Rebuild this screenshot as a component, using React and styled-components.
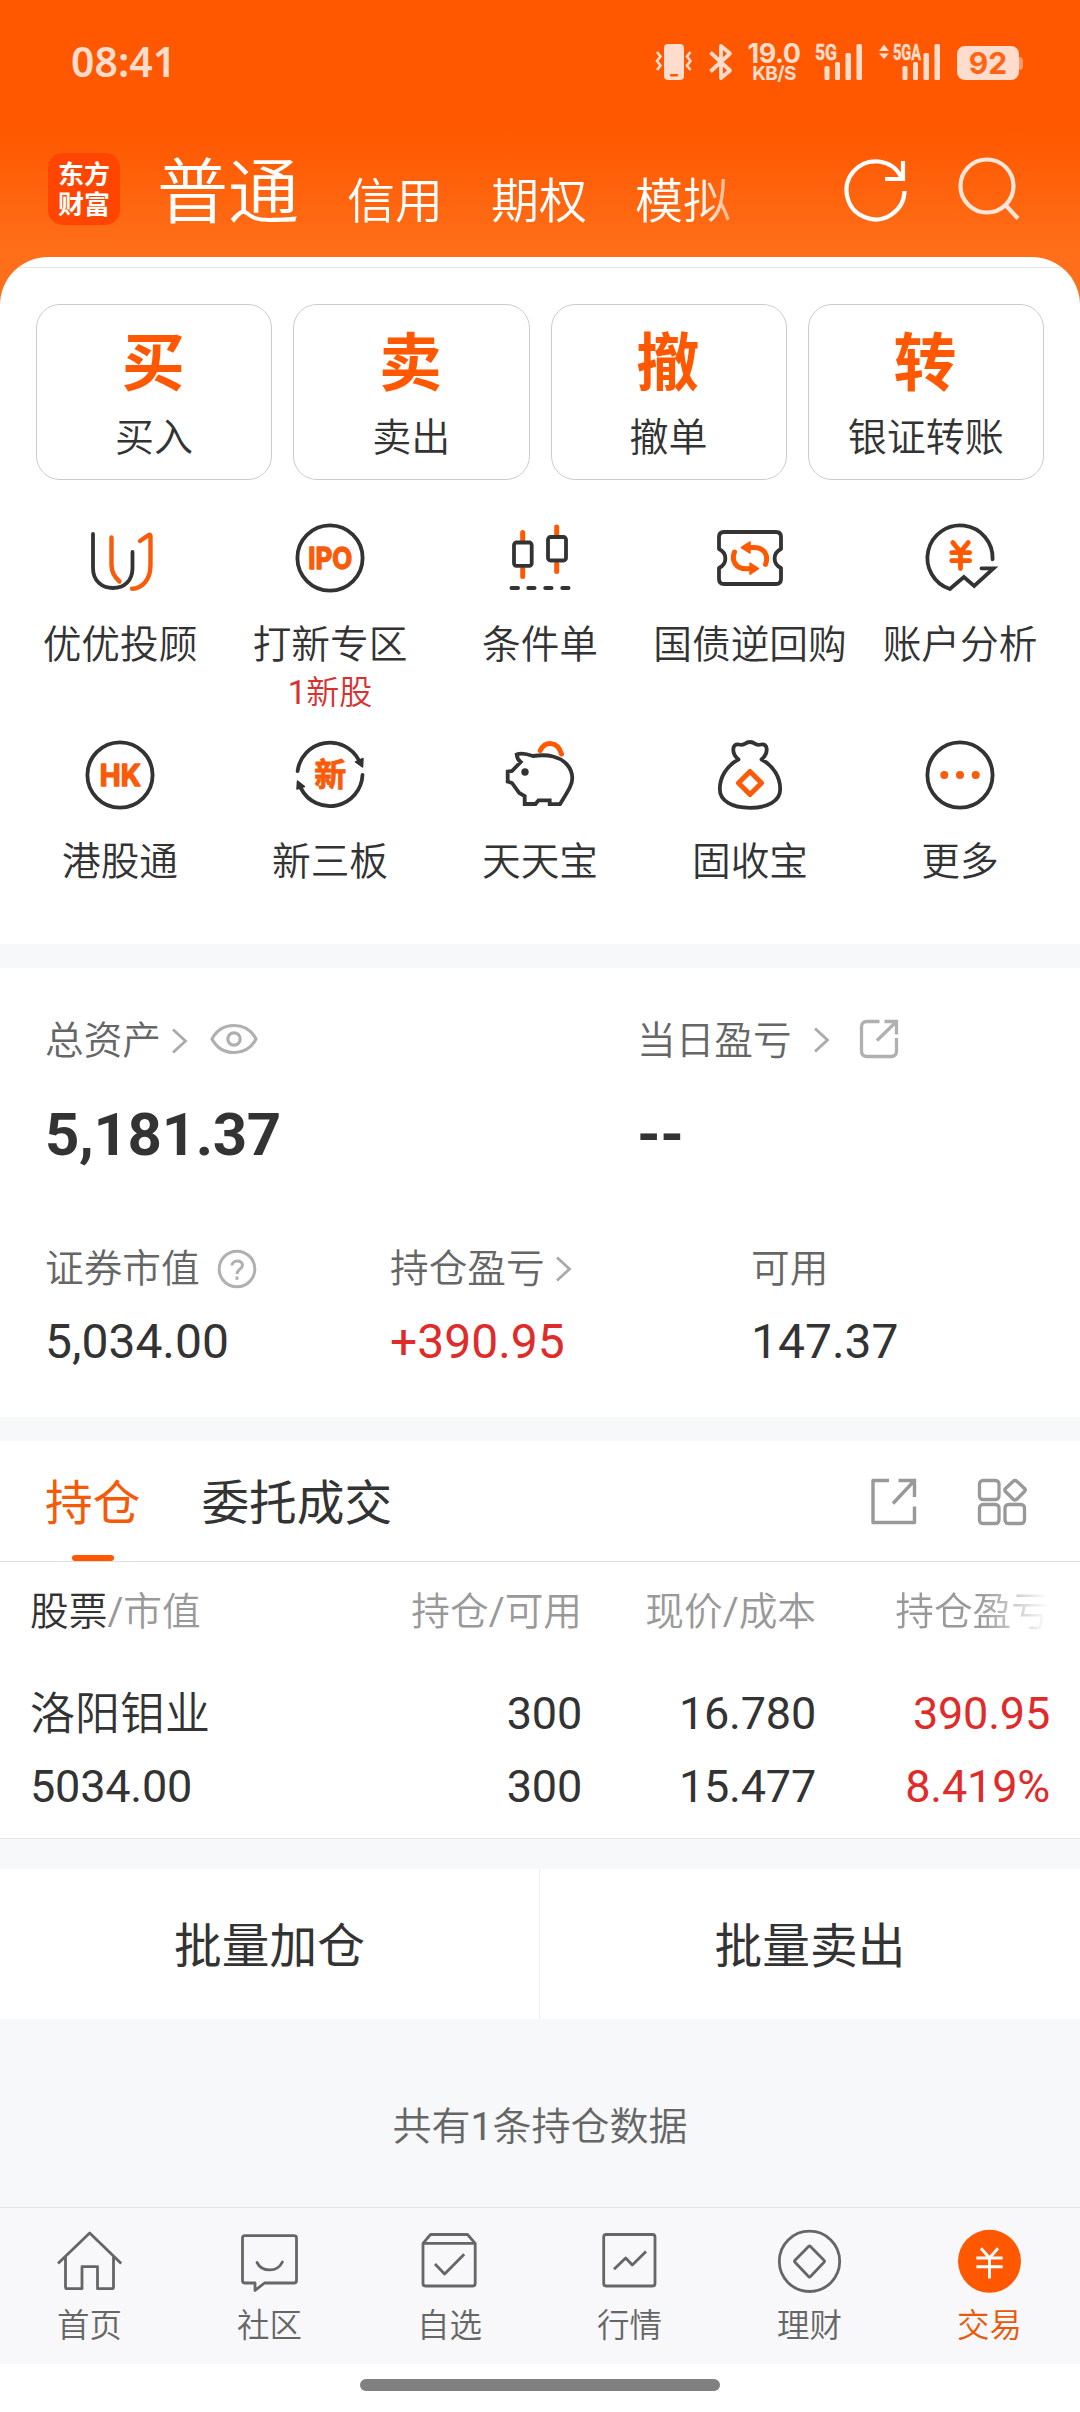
import React from 'react';
import styled, { createGlobalStyle } from 'styled-components';

const ORANGE = '#ff5800';
const DARK = '#333333';
const RED = '#e02b2b';

const GlobalStyle = createGlobalStyle`
  * {
    box-sizing: border-box;
  }

  body {
    margin: 0;
    background: #ffffff;
    font-family: Roboto, "Noto Sans CJK SC", sans-serif;
    font-weight: 350;
    color: ${DARK};
  }

  svg {
    display: block;
    flex: none;
    overflow: visible;
  }
`;

const Page = styled.div`
  display: flex;
  flex-direction: column;
  width: 1080px;
  height: 2412px;
  overflow: hidden;
  background: linear-gradient(to bottom, #ff5800 0, #ff5800 132px, #ff6e19 250px, #ff701c 320px);
`;

/* Latin characters inside light Chinese text */
const Latin = styled.span`
  font-weight: 400;
`;

const StatusBar = styled.div`
  display: flex;
  justify-content: space-between;
  height: 125px;
  padding: 42px 57px 0 71px;
  color: #ffdccb;
`;

const Clock = styled.div`
  font-family: "Noto Sans", sans-serif;
  font-size: 41px;
  font-weight: 650;
  line-height: 38px;
`;

const StatusIcons = styled.div`
  display: flex;
  align-items: flex-start;
`;

const NetSpeed = styled.div`
  display: flex;
  flex-direction: column;
  align-items: center;
  width: 56px;
  margin: 0 12px 0 13px;
  font-family: Inter, sans-serif;
  font-weight: 700;
  font-size: 27px;
  line-height: 23px;
  letter-spacing: -0.5px;
`;

const NetUnit = styled.span`
  font-size: 19px;
  line-height: 17px;
  font-weight: 700;
  letter-spacing: -0.6px;
`;

const Battery = styled.div`
  display: flex;
  align-items: center;
  margin: 4px 0 0 15px;
`;

const BatteryBody = styled.div`
  width: 62px;
  height: 34px;
  border-radius: 8px;
  background: #ffdccb;
  color: #ff6414;
  font-family: Inter, sans-serif;
  font-size: 30px;
  font-weight: 700;
  line-height: 35px;
  text-align: center;
`;

const BatteryCap = styled.div`
  width: 4px;
  height: 13px;
  border-radius: 0 4px 4px 0;
  background: #ff9a66;
`;

const Header = styled.div`
  display: flex;
  align-items: flex-start;
  height: 132px;
  padding: 28px 52px 0 48px;
`;

const Logo = styled.div`
  width: 72px;
  height: 72px;
  padding-top: 5px;
  border-radius: 15px;
  background: #ff4500;
  color: #ffffff;
  font-family: "Noto Sans CJK SC", sans-serif;
  font-size: 26px;
  font-weight: 700;
  line-height: 30px;
  text-align: center;
`;

const AccountTabs = styled.div`
  display: flex;
  align-items: flex-end;
  gap: 48px;
  width: 658px;
  height: 76px;
  margin-left: 37px;
  color: #ffffff;
  white-space: nowrap;
  mask-image: linear-gradient(to right, #000 0, #000 543px, transparent 603px);
`;

const AccountTab = styled.div`
  font-size: ${props => (props.$active ? '71px' : '48px')};
  line-height: ${props => (props.$active ? '73px' : '54px')};
`;

const HeaderIcons = styled.div`
  display: flex;
  gap: 49px;
  margin: 4px 0 0 30px;
`;

const Sheet = styled.div`
  height: 687px;
  flex: none;
  overflow: hidden;
  border-radius: 48px 48px 0 0;
  background: #ffffff;
`;

const SheetEdge = styled.div`
  height: 11px;
  border-bottom: 1px solid #e4e4e4;
`;

const ActionGrid = styled.div`
  display: grid;
  grid-template-columns: repeat(4, 1fr);
  gap: 21px;
  padding: 36px 36px 0;
`;

const ActionCard = styled.div`
  display: flex;
  flex-direction: column;
  align-items: center;
  height: 176px;
  padding-top: 24px;
  border: 1px solid #cccccc;
  border-radius: 24px;
`;

const ActionGlyph = styled.div`
  margin-right: 2px;
  color: ${ORANGE};
  font-size: 63px;
  font-weight: 700;
  line-height: 70px;
`;

const ActionLabel = styled.div`
  margin-top: 14px;
  font-size: 39px;
  line-height: 50px;
`;

const ShortcutGrid = styled.div`
  display: grid;
  grid-template-columns: repeat(5, 1fr);
  grid-auto-rows: 217px;
  padding: 42px 15px 0;
`;

const Shortcut = styled.div`
  display: flex;
  flex-direction: column;
  align-items: center;
  white-space: nowrap;
`;

const ShortcutLabel = styled.div`
  margin-top: 26px;
  font-size: 38.7px;
  line-height: 50px;
`;

const ShortcutHint = styled.div`
  color: #d93030;
  font-size: 33px;
  line-height: 46px;
`;

const Gap = styled.div`
  height: ${props => props.$height}px;
  flex: none;
  background: #f7f8fa;
`;

const Assets = styled.div`
  height: 449px;
  flex: none;
  padding: 48px 0 0 45px;
  background: #ffffff;
`;

const AssetRow = styled.div`
  display: grid;
  grid-template-columns: ${props => props.$columns};
`;

const AssetLabel = styled.div`
  display: flex;
  align-items: center;
  height: 50px;
  color: #666666;
  font-size: 38.7px;
  line-height: 50px;
`;

const AssetTotal = styled.div`
  margin: 34px 0 74px;
  font-size: 60px;
  font-weight: 700;
  line-height: 70px;
  letter-spacing: -0.35px;
`;

const AssetValue = styled.div`
  margin-top: 18px;
  color: ${props => (props.$up ? RED : DARK)};
  font-size: 48px;
  font-weight: 400;
  line-height: 60px;
`;

const IconSlot = styled.span`
  margin-left: ${props => props.$left}px;
  margin-bottom: ${props => props.$lift || 0}px;
`;

const TabBar = styled.div`
  display: flex;
  gap: 61px;
  height: 121px;
  flex: none;
  padding: 0 53px 0 45px;
  border-bottom: 1px solid #dedede;
  background: #ffffff;
`;

const Tab = styled.div`
  display: flex;
  flex-direction: column;
  align-items: center;
  justify-content: space-between;
  padding-top: 33px;
  color: ${props => (props.$active ? '#f55a08' : DARK)};
  font-size: 47.7px;
  font-weight: 400;
  line-height: 60px;
`;

const TabMark = styled.div`
  width: 42px;
  height: 6px;
  border-radius: 3px;
  background: ${ORANGE};
`;

const TabTools = styled.div`
  display: flex;
  gap: 60px;
  margin: 36px 0 0 auto;
`;

const Holdings = styled.div`
  height: 277px;
  flex: none;
  border-bottom: 1px solid #e6e6e6;
  background: #ffffff;
`;

const HoldingRow = styled.div`
  display: grid;
  grid-template-columns: 317px 235px 234px 234px;
  padding: 0 0 0 30px;
  text-align: right;
  white-space: nowrap;
`;

const HeadRow = styled(HoldingRow)`
  padding-top: 25px;
  margin-bottom: 40px;
  color: #999999;
  font-size: 38.7px;
  line-height: 50px;
`;

const NameHead = styled.div`
  text-align: left;

  b {
    color: ${DARK};
    font-weight: inherit;
  }
`;

const FadedHead = styled.div`
  mask-image: linear-gradient(to right, #000 0, #000 165px, transparent 233px);
`;

const HoldingCell = styled.div`
  color: ${props => (props.$up ? RED : DARK)};
  font-size: 45px;
  font-weight: ${props => (props.$name ? 350 : 400)};
  line-height: ${props => (props.$name ? '75px' : '73px')};
  letter-spacing: ${props => (props.$name ? 0 : '-0.2px')};
  text-align: ${props => (props.$left ? 'left' : 'right')};
  height: 73px;
`;

const BatchBar = styled.div`
  display: grid;
  grid-template-columns: 540px 540px;
  height: 150px;
  flex: none;
  background: #ffffff;
`;

const BatchButton = styled.div`
  border-right: ${props => (props.$divided ? '1px solid #eeeeee' : 'none')};
  font-size: 47.7px;
  font-weight: 400;
  line-height: 156px;
  text-align: center;
`;

const Summary = styled.div`
  height: 188px;
  flex: none;
  background: #f6f8fa;
  color: #666666;
  font-size: 39px;
  line-height: 216px;
  text-align: center;
`;

const BottomNav = styled.div`
  display: grid;
  grid-template-columns: repeat(6, 180px);
  height: 157px;
  flex: none;
  border-top: 1px solid #e2e3e5;
  background: #f8f8fb;
`;

const NavItem = styled.div`
  display: flex;
  flex-direction: column;
  align-items: center;
  padding-top: 17px;
  color: ${props => (props.$active ? '#e8590c' : '#666666')};
  font-size: 32.5px;
  line-height: 44px;
`;

const NavLabel = styled.div`
  margin: 7px 1px 0 0;
`;

const HomeArea = styled.div`
  display: flex;
  justify-content: center;
  height: 48px;
  flex: none;
  padding-top: 15px;
  background: #ffffff;
`;

const HomePill = styled.div`
  width: 360px;
  height: 12px;
  border-radius: 6px;
  background: #808080;
`;

/* ---------- status bar icons ---------- */

const VibrateIcon = () => (
    <svg width="38" height="40" viewBox="0 0 38 40" fill="none">
        <rect x="9" y="2" width="20" height="36" rx="4" fill="#ffdccb"/>
        <rect x="15" y="32" width="8" height="2.5" rx="1" fill={ORANGE}/>
        <path d="M2 10l3.5 4.5L2 19l3.5 4.5L2 28M35.5 10L32 14.5l3.5 4.5L32 23.5l3.5 4.5" stroke="#ffdccb" strokeWidth="2.6"/>
    </svg>
);

const BluetoothIcon = () => (
    <svg width="24" height="40" viewBox="0 0 24 40" fill="none" stroke="#ffdccb" strokeWidth="3.8" strokeLinejoin="round">
        <path d="M1.5 10.5L21 28.5L12 36V4L21 11.5L1.5 29.5"/>
    </svg>
);

const SignalIcon = ({ label, arrows }) => (
    <svg width={arrows ? 64 : 50} height="40" viewBox={arrows ? '-14 0 64 40' : '0 0 50 40'} fill="#ffdccb">
        {arrows && <path d="M-13 9L-8 2.5L-3 9zM-13 11.5L-8 17L-3 11.5z"/>}
        <text
            x="1" y="17.5" fontFamily="Roboto, sans-serif" fontSize="21.5" fontWeight="700"
            textLength={arrows ? 28 : 22} lengthAdjust="spacingAndGlyphs" stroke="#ffdccb" strokeWidth="0.5"
        >
            {label}
        </text>
        <rect x="10.5" y="24" width="5" height="14" rx="1.5"/>
        <rect x="21" y="20" width="5" height="18" rx="1.5"/>
        <rect x="31.5" y="11" width="5.5" height="27" rx="1.5"/>
        <rect x="42.5" y="2" width="5.5" height="36" rx="1.5"/>
    </svg>
);

/* ---------- header icons ---------- */

const RefreshIcon = () => (
    <svg width="62" height="66" viewBox="0 0 62 66" fill="none" stroke="#ffffff" strokeWidth="4.2">
        <path d="M59.5 34A29 29 0 1 1 56 19.5"/>
        <path d="M58 4V22H40"/>
    </svg>
);

const SearchIcon = () => (
    <svg width="68" height="66" viewBox="0 0 68 66" fill="none" stroke="#ffe6d9" strokeWidth="4.2">
        <circle cx="31" cy="29" r="26.5"/>
        <path d="M49 47.5L62 61.5"/>
    </svg>
);

/* ---------- shortcut icons, all in a 72px box ---------- */

const Glyph = ({ children }) => (
    <svg width="72" height="72" viewBox="0 0 72 72" fill="none" stroke={DARK} strokeWidth="3.8" strokeLinecap="round" strokeLinejoin="round">
        {children}
    </svg>
);

const AdvisorIcon = () => (
    <Glyph>
        <path d="M9 12V46C9 59 18 66 29 66S48.5 59 48.5 46V30"/>
        <g stroke="#f85c0a" strokeWidth="4.4">
            <path d="M27.5 15.5V43C27.5 50 30.5 55 35.5 59.5"/>
            <path d="M56 19L65 12.8Q66.5 12.5 66.5 14.5V43C66.5 58 58 66.5 48 66.8"/>
        </g>
    </Glyph>
);

const RoundText = ({ text, width }) => (
    <Glyph>
        <circle cx="36" cy="36" r="32.6"/>
        <text
            x="36.3" y="47" textAnchor="middle" textLength={width} lengthAdjust="spacingAndGlyphs"
            fontFamily="Inter, sans-serif" fontSize="30" fontWeight="700"
            fill="#f85c0a" stroke="#f85c0a" strokeWidth="1.5"
        >
            {text}
        </text>
    </Glyph>
);

const ConditionIcon = () => (
    <Glyph>
        <path stroke="#ff5800" strokeWidth="5" d="M18.7 10.5V18M18.7 47V54.5M52.7 5V13M52.7 42V49.5"/>
        <rect x="10" y="20.5" width="17.7" height="23.3" rx="2.5"/>
        <rect x="44" y="15" width="18" height="23.5" rx="2.5"/>
        <path strokeWidth="4" d="M7.5 66H14M24.3 66H30.5M41.3 66H47.5M58.3 66H64.5"/>
    </Glyph>
);

const TicketIcon = () => (
    <Glyph>
        <path d="M10 10H62Q67 10 67 15V27C58.5 31 58.5 42 67 46V57Q67 62 62 62H10Q5 62 5 57V46C13.5 42 13.5 31 5 27V15Q5 10 10 10Z"/>
        <g stroke="#ff5800" strokeWidth="5">
            <path d="M51.5 42.5C55 33 50 25.5 40 25.5H35"/>
            <path d="M20.5 30C17 39 22 46.7 32 46.7H37"/>
        </g>
        <path fill="#ff5800" stroke="#ff5800" strokeWidth="1.5" d="M27.5 25.5L36 20V31ZM44.5 46.7L36 41.2V52.2Z"/>
    </Glyph>
);

const AnalysisIcon = () => (
    <Glyph>
        <path strokeLinejoin="miter" d="M68.6 37.3A32.6 32.6 0 1 0 25.8 67L39.9 55L50.2 64L69.5 46.3H57.5"/>
        <path stroke="#ff5800" strokeWidth="4.8" d="M28.8 20.5L36.5 30L44.3 20.5M27.7 30.7H45.6M27.7 38.7H45.6M36.5 30V46.5"/>
    </Glyph>
);

const NewBoardIcon = () => (
    <Glyph>
        <path d="M3.6 32A32.6 32.6 0 0 1 65 21.5M68.5 36A32.6 32.6 0 0 1 7 49.5"/>
        <path fill={DARK} strokeWidth="1.5" d="M61.5 23L69 19.5L68.5 28ZM3 50L3.5 42L10.5 47.5Z"/>
        <text
            x="36.3" y="47.3" textAnchor="middle" fontFamily="Noto Sans CJK SC, sans-serif"
            fontSize="32" fontWeight="700" fill="#f85c0a" stroke="#f85c0a" strokeWidth="0.8"
        >
            新
        </text>
    </Glyph>
);

const PiggyIcon = () => (
    <Glyph>
        <path stroke="#ff5800" strokeWidth="5" d="M36.3 11.5C41 2 53.5 1.5 57.5 15"/>
        <path strokeLinejoin="miter" d="M12.7 15.5C17 13.5 22 14.5 29 17C36 16 43 15.8 49 17.5C61 20.5 68 29 68.3 39C68.3 46 64 52 56 65.2H45.7V61.3H34.5L31.5 65H20.7V57L15.3 54L8 44L3.7 42.6V32.6L8 32L16.7 23Q13 20 12.7 15.5Z"/>
        <circle cx="21" cy="33" r="3.7" fill={DARK} stroke="none"/>
    </Glyph>
);

const MoneyBagIcon = () => (
    <Glyph>
        <path d="M24.5 20.5C17 14 18 4 25 5.5Q28 6.3 30.5 5Q36 1 41.5 5Q44 6.3 47 5.5C54 4 55 14 47.5 20.5C60 27 66.2 39 66.2 50C66.2 62 54 68.8 36 68.8S5.8 62 5.8 50C5.8 39 12 27 24.5 20.5Z"/>
        <path stroke="#f85c0a" strokeWidth="5" d="M36 32.5L47.5 44L36 55.5L24.5 44Z"/>
    </Glyph>
);

const MoreIcon = () => (
    <Glyph>
        <circle cx="36" cy="36" r="32.6"/>
        <g fill="#f85c0a" stroke="none">
            <circle cx="20.3" cy="36" r="4"/>
            <circle cx="36" cy="36" r="4"/>
            <circle cx="51.7" cy="36" r="4"/>
        </g>
    </Glyph>
);

/* ---------- asset and tab icons ---------- */

const Chevron = () => (
    <svg width="18" height="28" viewBox="0 0 18 28" fill="none" stroke="#aaaaaa" strokeWidth="2.8">
        <path d="M2 2.500L14.5 14L2 25.500"/>
    </svg>
);

const EyeIcon = () => (
    <svg width="48" height="32" viewBox="0 0 48 32" fill="none" stroke="#b0b0b0" strokeWidth="3.2">
        <path d="M2 16C7 6.5 15 2.5 24 2.5S41 6.5 46 16C41 25.5 33 29.5 24 29.5S7 25.5 2 16Z"/>
        <circle cx="24" cy="16" r="6.2"/>
    </svg>
);

const HelpIcon = () => (
    <svg width="40" height="40" viewBox="0 0 40 40" fill="none" stroke="#b0b0b0" strokeWidth="3">
        <circle cx="20" cy="20" r="17.8"/>
        <path d="M15 16.5C15 10.5 25.5 10.5 25.5 16C25.5 20 20 20.5 20 25"/>
        <path d="M20 27.5V30.8"/>
    </svg>
);

const ShareIcon = () => (
    <svg width="40" height="40" viewBox="0 0 40 40" fill="none" stroke="#b0b0b0" strokeWidth="3.3">
        <path d="M20.5 2.5H8Q2.5 2.5 2.5 8V32Q2.5 37.5 8 37.5H32Q37.5 37.5 37.5 32V19"/>
        <path d="M25.5 2.5H37.5V15.5M37.5 2.5L18 21.5"/>
    </svg>
);

const ExportIcon = () => (
    <svg width="48" height="48" viewBox="0 0 48 48" fill="none" stroke="#999999" strokeWidth="3.4">
        <path d="M20 3.5H4V45.5H45.5V29.5" strokeLinejoin="round"/>
        <path d="M29.5 3.5H45.5V20M45.5 3.5L24 26.5"/>
    </svg>
);

const BlocksIcon = () => (
    <svg width="50" height="48" viewBox="0 0 50 48" fill="none" stroke="#999999" strokeWidth="3.3" strokeLinejoin="round">
        <rect x="2.5" y="3.5" width="19.5" height="19" rx="3.5"/>
        <path d="M36 4.5Q38 2.5 40 4.5L47.5 11.5Q49 13 47.5 14.5L40 22Q38 24 36 22L28.5 14.5Q27 13 28.5 11.5Z"/>
        <rect x="2.5" y="27.500" width="19.5" height="19" rx="3.5"/>
        <rect x="28" y="27.500" width="19.5" height="19" rx="3.5"/>
    </svg>
);

/* ---------- bottom navigation icons ---------- */

const NavGlyph = ({ children }) => (
    <svg width="72" height="72" viewBox="0 0 72 72" fill="none" stroke="#666666" strokeWidth="2.8" strokeLinejoin="round">
        {children}
    </svg>
);

const HomeIcon = () => (
    <NavGlyph>
        <path d="M4 38.5L35.7 8L67.2 38.5M11.5 32V62Q11.5 63.7 13 63.7H28V41.7H43.5V63.7H58Q59.5 63.7 59.5 62V32"/>
    </NavGlyph>
);

const CommunityIcon = () => (
    <NavGlyph>
        <path d="M11 10.7H60Q62.5 10.7 62.5 13V55.5Q62.5 58 60 58H30.5L21 65.5V58H11Q8.5 58 8.5 55.5V13Q8.5 10.7 11 10.7Z"/>
        <path strokeLinecap="round" d="M23 37.5C28 47.5 43.5 47.5 48.4 37"/>
    </NavGlyph>
);

const WatchlistIcon = () => (
    <NavGlyph>
        <path d="M9 18.3L16.5 9.5H53.5L61.2 18.3V58.5Q61.2 61 58.5 61H11.5Q9 61 9 58.5ZM9 18.3H61.2M21 39L30.6 49L50.2 29.3"/>
    </NavGlyph>
);

const MarketIcon = () => (
    <NavGlyph>
        <rect x="9.7" y="9.5" width="51.3" height="51.5" rx="2.5"/>
        <path d="M20 44.3L31.7 33L38.3 40L52 26.5"/>
    </NavGlyph>
);

const WealthIcon = () => (
    <NavGlyph>
        <circle cx="35.5" cy="36.3" r="30.2"/>
        <path d="M34.5 21.5Q35.5 20.5 36.5 21.5L50 35.3Q51 36.3 50 37.3L36.5 51.5Q35.5 52.5 34.5 51.5L21 37.3Q20 36.3 21 35.3Z"/>
    </NavGlyph>
);

const TradeIcon = () => (
    <NavGlyph>
        <circle cx="35.5" cy="36.3" r="31.5" fill={ORANGE} stroke="none"/>
        <path stroke="#ffffff" strokeWidth="2.9" d="M27 23.3L35.5 33L44 23.3M22.3 33H48.7M22.3 41.7H48.7M35.5 33V53.5"/>
    </NavGlyph>
);

const actions = [
    { glyph: '买', label: '买入' },
    { glyph: '卖', label: '卖出' },
    { glyph: '撤', label: '撤单' },
    { glyph: '转', label: '银证转账' },
];

const shortcuts = [
    { label: '优优投顾', icon: <AdvisorIcon/> },
    { label: '打新专区', icon: <RoundText text="IPO" width={44}/>, count: 1, hint: '新股' },
    { label: '条件单', icon: <ConditionIcon/> },
    { label: '国债逆回购', icon: <TicketIcon/> },
    { label: '账户分析', icon: <AnalysisIcon/> },
    { label: '港股通', icon: <RoundText text="HK" width={41}/> },
    { label: '新三板', icon: <NewBoardIcon/> },
    { label: '天天宝', icon: <PiggyIcon/> },
    { label: '固收宝', icon: <MoneyBagIcon/> },
    { label: '更多', icon: <MoreIcon/> },
];

const navItems = [
    { label: '首页', icon: <HomeIcon/> },
    { label: '社区', icon: <CommunityIcon/> },
    { label: '自选', icon: <WatchlistIcon/> },
    { label: '行情', icon: <MarketIcon/> },
    { label: '理财', icon: <WealthIcon/> },
    { label: '交易', icon: <TradeIcon/>, active: true },
];

const App = () => {
    return (
        <Page>
            <GlobalStyle/>
            <StatusBar>
                <Clock>08:41</Clock>
                <StatusIcons>
                    <VibrateIcon/>
                    <IconSlot $left={16}><BluetoothIcon/></IconSlot>
                    <NetSpeed>
                        19.0
                        <NetUnit>KB/S</NetUnit>
                    </NetSpeed>
                    <SignalIcon label="5G"/>
                    <IconSlot $left={14}><SignalIcon label="5GA" arrows/></IconSlot>
                    <Battery>
                        <BatteryBody>92</BatteryBody>
                        <BatteryCap/>
                    </Battery>
                </StatusIcons>
            </StatusBar>
            <Header>
                <Logo>东方<br/>财富</Logo>
                <AccountTabs>
                    <AccountTab $active>普通</AccountTab>
                    <AccountTab>信用</AccountTab>
                    <AccountTab>期权</AccountTab>
                    <AccountTab>模拟</AccountTab>
                </AccountTabs>
                <HeaderIcons>
                    <RefreshIcon/>
                    <SearchIcon/>
                </HeaderIcons>
            </Header>

            <Sheet>
                <SheetEdge/>
                <ActionGrid>
                    {actions.map(item => (
                        <ActionCard key={item.label}>
                            <ActionGlyph>{item.glyph}</ActionGlyph>
                            <ActionLabel>{item.label}</ActionLabel>
                        </ActionCard>
                    ))}
                </ActionGrid>
                <ShortcutGrid>
                    {shortcuts.map(item => (
                        <Shortcut key={item.label}>
                            {item.icon}
                            <ShortcutLabel>{item.label}</ShortcutLabel>
                            {item.hint && <ShortcutHint><Latin>{item.count}</Latin>{item.hint}</ShortcutHint>}
                        </Shortcut>
                    ))}
                </ShortcutGrid>
            </Sheet>

            <Gap $height={24}/>
            <Assets>
                <AssetRow $columns="592px 1fr">
                    <div>
                        <AssetLabel>
                            总资产
                            <IconSlot $left={10}><Chevron/></IconSlot>
                            <IconSlot $left={21} $lift={5}><EyeIcon/></IconSlot>
                        </AssetLabel>
                        <AssetTotal>5,181.37</AssetTotal>
                    </div>
                    <div>
                        <AssetLabel>
                            当日盈亏
                            <IconSlot $left={21} $lift={3}><Chevron/></IconSlot>
                            <IconSlot $left={28} $lift={4}><ShareIcon/></IconSlot>
                        </AssetLabel>
                        <AssetTotal>--</AssetTotal>
                    </div>
                </AssetRow>
                <AssetRow $columns="345px 361px 1fr">
                    <div>
                        <AssetLabel>
                            证券市值
                            <IconSlot $left={17}><HelpIcon/></IconSlot>
                        </AssetLabel>
                        <AssetValue>5,034.00</AssetValue>
                    </div>
                    <div>
                        <AssetLabel>
                            持仓盈亏
                            <IconSlot $left={10}><Chevron/></IconSlot>
                        </AssetLabel>
                        <AssetValue $up>+390.95</AssetValue>
                    </div>
                    <div>
                        <AssetLabel>可用</AssetLabel>
                        <AssetValue>147.37</AssetValue>
                    </div>
                </AssetRow>
            </Assets>

            <Gap $height={24}/>
            <TabBar>
                <Tab $active>
                    持仓
                    <TabMark/>
                </Tab>
                <Tab>委托成交</Tab>
                <TabTools>
                    <ExportIcon/>
                    <BlocksIcon/>
                </TabTools>
            </TabBar>
            <Holdings>
                <HeadRow>
                    <NameHead><b>股票</b><Latin>/</Latin>市值</NameHead>
                    <div>持仓<Latin>/</Latin>可用</div>
                    <div>现价<Latin>/</Latin>成本</div>
                    <FadedHead>持仓盈亏</FadedHead>
                </HeadRow>
                <HoldingRow>
                    <HoldingCell $left $name>洛阳钼业</HoldingCell>
                    <HoldingCell>300</HoldingCell>
                    <HoldingCell>16.780</HoldingCell>
                    <HoldingCell $up>390.95</HoldingCell>
                </HoldingRow>
                <HoldingRow>
                    <HoldingCell $left>5034.00</HoldingCell>
                    <HoldingCell>300</HoldingCell>
                    <HoldingCell>15.477</HoldingCell>
                    <HoldingCell $up>8.419%</HoldingCell>
                </HoldingRow>
            </Holdings>

            <Gap $height={30}/>
            <BatchBar>
                <BatchButton $divided>批量加仓</BatchButton>
                <BatchButton>批量卖出</BatchButton>
            </BatchBar>
            <Summary>共有<Latin>1</Latin>条持仓数据</Summary>

            <BottomNav>
                {navItems.map(item => (
                    <NavItem key={item.label} $active={item.active}>
                        {item.icon}
                        <NavLabel>{item.label}</NavLabel>
                    </NavItem>
                ))}
            </BottomNav>
            <HomeArea>
                <HomePill/>
            </HomeArea>
        </Page>
    );
};

export default App;
